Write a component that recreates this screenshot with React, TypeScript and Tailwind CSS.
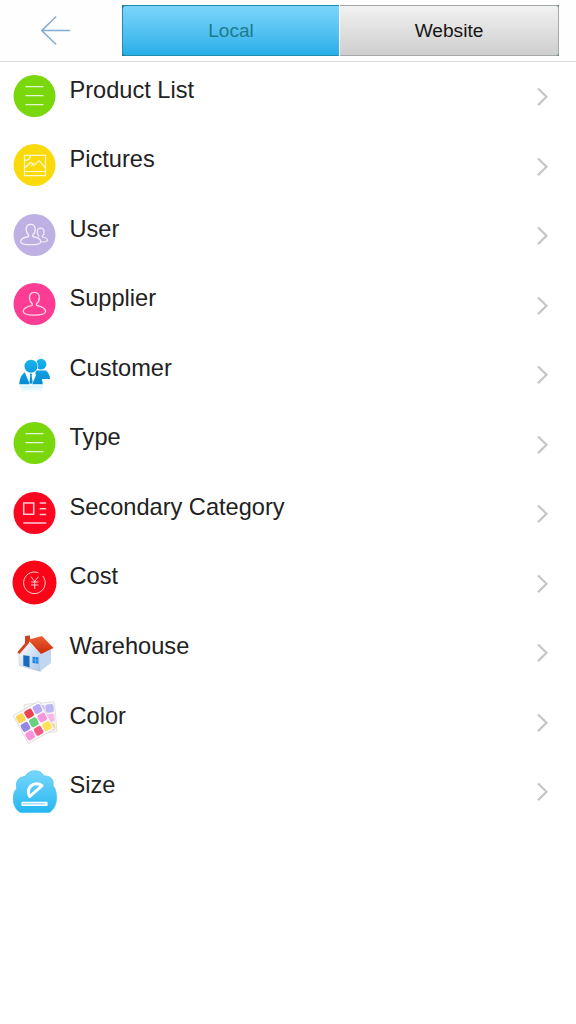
import type { ReactNode } from "react";

function Disc({ color, r = 21, children }: { color: string; r?: number; children: ReactNode }) {
  return (
    <>
      <circle cx="29.5" cy="30" r={r} fill={color} />
      <g fill="none" stroke="#fff" strokeOpacity="0.8" strokeWidth="1.2" strokeLinejoin="round">
        {children}
      </g>
    </>
  );
}

const listIcon = (
  <Disc color="#79d70c">
    <path d="M20.5 20.6h18M20.5 29.6h18M20.5 38.6h18" />
  </Disc>
);

const pictureIcon = (
  <Disc color="#fbda0b">
    <path d="M19.5 20.3h21v20.4h-21zM19.5 36.5h21M20 32.8l5.8-5.6 3 3.4 5.2-5 6.5 7.2M25.5 20.3c0 3.3-2.3 5.2-6 5.2M26 31l3-3" />
  </Disc>
);

const usersIcon = (
  <Disc color="#beb0e3">
    <path
      strokeWidth="1.3"
      d="M25.6 19.3c-2.8 0-4.4 2-4.4 5 0 2.4.9 4.4 2.4 5.4v1.8c-4.3.8-8 2.7-8 5.2 0 2 3.7 3 10.1 3s10.1-1 10.1-3c0-2.500-3.700-4.400-8-5.200v-1.800c1.500-1 2.400-3 2.400-5.400 0-3-1.600-5-4.600-5z"
    />
    <path d="M33.700 30.600c-.9-.8-1.400-2-1.400-3.400 0-2.400 1.300-4 3.400-4s3.400 1.600 3.400 4c0 1.600-.6 2.800-1.600 3.500v1.300c2.900.6 5 1.700 5 3.200 0 1.300-2.400 1.800-6.300 1.800M33.700 30.600v1.200" />
  </Disc>
);

const supplierIcon = (
  <Disc color="#fc3d93">
    <path
      strokeWidth="1.3"
      d="M29.400 18.300c-3.100 0-4.900 2.200-4.900 5.400 0 2.600 1 4.700 2.700 5.800v1.800c-4.600.9-9 3.100-9 6.300 0 2.600 4.400 3.500 11.200 3.500s11.200-.9 11.200-3.500c0-3.200-4.400-5.400-9-6.300v-1.800c1.700-1.100 2.700-3.200 2.700-5.800 0-3.200-1.800-5.400-4.900-5.400z"
    />
  </Disc>
);

const customerIcon = (
  <>
    <defs>
      <linearGradient id="customer" x1="0" y1="15" x2="0" y2="40" gradientUnits="userSpaceOnUse">
        <stop offset="0" stopColor="#1bb3ee" />
        <stop offset="1" stopColor="#058bd6" />
      </linearGradient>
      <linearGradient id="customer-shade" x1="0" y1="0" x2="0" y2="1">
        <stop offset="0" stopColor="#8fdcf8" stopOpacity="0.4" />
        <stop offset="1" stopColor="#8fdcf8" stopOpacity="0" />
      </linearGradient>
    </defs>
    <g fill="url(#customer)">
      <circle cx="36" cy="20.2" r="5.4" />
      <path d="M31 26.5h9.800c2.500 1.700 4 4.700 4.300 8.600h-9l-6-5z" />
      <circle cx="26" cy="22.2" r="7.200" fill="#fff" />
      <circle cx="26" cy="22.2" r="6.500" />
      <path d="M14.200 40.300c.4-6 2.200-10 5.600-12l5 12z" />
      <path d="M37.800 40.300c-.4-6-2.200-10-5.600-12l-5 12z" />
      <path d="M21.500 29l3.300 9 1-6.500-1-1.800zM30.500 29l-3.300 9-1-6.500 1-1.800z" fill="#fff" />
      <path d="M24.700 29.800h2.600l-.6 2 1 6.500-1.700 2-1.700-2 1-6.500z" />
    </g>
    <path d="M15 41.500h23l-1.500 7h-20z" fill="url(#customer-shade)" />
  </>
);

const categoryIcon = (
  <Disc color="#fc0622">
    <path strokeWidth="1.5" strokeLinejoin="miter" d="M18.7 20h10v11.300h-10zM34.700 20h6.500M34.700 25.700h6.500M34.700 31.500h6.500M18.300 40h23" />
  </Disc>
);

const costIcon = (
  <g transform="translate(0 0.5)">
    <Disc color="#fc0417" r={22}>
      <path strokeWidth="1" d="M33.500 20.300a10.800 10.800 0 1 0 4.300 3.200" />
      <path strokeWidth="1" d="M26 24.200l3.700 4.800 3.700-4.800M26 29.500h7.400M26 32.500h7.400M29.700 29v7.500" />
    </Disc>
  </g>
);

const houseIcon = (
  <>
    <defs>
      <linearGradient id="wall" x1="0" y1="0" x2="1" y2="1">
        <stop offset="0" stopColor="#ffffff" />
        <stop offset="1" stopColor="#a9c4e6" />
      </linearGradient>
      <linearGradient id="roof" x1="0" y1="0" x2="0" y2="1">
        <stop offset="0" stopColor="#ed5d33" />
        <stop offset="1" stopColor="#cb2c0a" />
      </linearGradient>
    </defs>
    <path d="M14 30.500l9-10 12.500 10.500v18.500L14 43.500z" fill="url(#wall)" stroke="#a9b9cd" strokeWidth="0.4" />
    <path d="M35 31.500l11-4v13.500l-11 8.500z" fill="#c3d6ef" />
    <path d="M20 14l5-.4v6l-5 3z" fill="#cc4323" />
    <path d="M23 17.700l14-3.700 11.500 12-12.500 6z" fill="url(#roof)" />
    <path d="M12.300 30.200L23 17.700l1.200 3.100L14.500 32z" fill="#d8401d" />
    <path d="M18.300 33.200l6.200.8v11.500l-6.200-1.900z" fill="#1669bf" />
    <path d="M27.500 34.800l6 .4v6.500l-6-.8z" fill="#2287e2" />
    <path d="M30.500 35v6.300M27.500 37.900l6 .5" stroke="#8fc3f5" strokeWidth="0.5" />
  </>
);

const swatches = ["#ffd455", "#ee4150", "#b9aaf6", "#9288e2", "#69d081", "#f895e0", "#fa92dc", "#f45b87", "#fde257"];

const colorIcon = (
  <>
    <g transform="translate(19 13.5) rotate(-5)">
      <rect width="30.5" height="30" rx="1" fill="#f7f5f5" stroke="#d9d2d2" strokeWidth="0.6" />
      <rect x="12" y="2" width="8.2" height="8.2" rx="2" fill="#c3b7f7" />
      <rect x="21" y="2" width="8.2" height="8.2" rx="2" fill="#bcb6f4" />
      <rect x="21" y="11.5" width="8.2" height="8.2" rx="2" fill="#f7b9ea" />
      <rect x="21" y="21" width="8.2" height="7.5" rx="2" fill="#fbe08d" />
    </g>
    <g transform="translate(8 24.5) rotate(-29)">
      <rect width="30" height="32" rx="1" fill="#fbf9f9" stroke="#d4cece" strokeWidth="0.6" />
      {swatches.map((fill, i) => (
        <rect key={i} x={1.3 + (i % 3) * 9.6} y={2 + Math.floor(i / 3) * 9.8} width="8.2" height="8.4" rx="2" fill={fill} />
      ))}
    </g>
  </>
);

const sizeIcon = (
  <g transform="translate(0 0.8)">
    <defs>
      <linearGradient id="cloud" x1="0" y1="0" x2="0" y2="1">
        <stop offset="0" stopColor="#79d7fb" />
        <stop offset="1" stopColor="#24b7f2" />
      </linearGradient>
    </defs>
    <path
      d="M15.5 50.800c-4.700-2.600-7.200-7.500-7.200-13.500 0-5 1-8.700 3.500-10.300-1.500-6.500 1-12 8.300-12.200 2-3.800 6-6 10.700-5.800 3.700.2 6.700 2.200 8.200 5.200 6.300-.7 10.300 3.800 9 9.800 2.500 2.500 3.500 7 3.500 12 0 6.500-2.500 12-7.300 14.800z"
      fill="url(#cloud)"
      stroke="#3fc0f2"
      strokeWidth="0.7"
    />
    <path d="M37 23.800c-2.800-2.500-8-2.600-11 .2-2.800 2.600-3.300 6.800-1.200 10.700z" fill="none" stroke="#fff" strokeWidth="3" strokeLinejoin="round" />
    <rect x="16.5" y="40" width="26" height="4.300" rx="0.6" fill="#fff" />
    <path d="M18.500 41.900h22" stroke="#42bff3" strokeWidth="1.4" strokeDasharray="1 1" />
  </g>
);

const items = [
  { label: "Product List", icon: listIcon },
  { label: "Pictures", icon: pictureIcon },
  { label: "User", icon: usersIcon },
  { label: "Supplier", icon: supplierIcon },
  { label: "Customer", icon: customerIcon },
  { label: "Type", icon: listIcon },
  { label: "Secondary Category", icon: categoryIcon },
  { label: "Cost", icon: costIcon },
  { label: "Warehouse", icon: houseIcon },
  { label: "Color", icon: colorIcon },
  { label: "Size", icon: sizeIcon },
];

export default function App() {
  return (
    <div className="min-h-screen bg-white font-['Liberation_Sans',Arial,sans-serif]">
      <header className="flex h-[62px] items-start border-b border-[#dcdce0] bg-[#fefefe] pt-[5px]">
        <button className="ml-10 mr-[50px] mt-[10px] h-8 w-8" aria-label="Back">
          <svg width="32" height="32" viewBox="0 0 32 32" fill="none" stroke="#83acd5" strokeWidth="1.5" strokeLinecap="round" strokeLinejoin="round">
            <path d="M29.700 15.600H1.700M15.700 2L1.700 15.600l14 13.400" />
          </svg>
        </button>
        <div className="flex h-[51px] w-[437px] gap-px text-[19.1px]">
          <div className="w-[217px] bg-[#17788c]">
            <button className="h-full w-full rounded-l-[4px] border border-r-0 border-[#238dad] bg-linear-to-b from-[#7ad5fb] to-[#22afe8] pt-0.5 text-[#1d7c8c]">
              Local
            </button>
          </div>
          <div className="flex-1 bg-[#557f88]">
            <button className="h-full w-full rounded-r-[3px] border border-l-0 border-[#a5a8a9] bg-linear-to-b from-[#f2f2f2] to-[#cecece] pt-0.5 text-[#151515]">
              Website
            </button>
          </div>
        </div>
      </header>

      <ul>
        {items.map((item) => (
          <li key={item.label} className="flex h-[69.55px] items-start">
            <svg className="ml-[5px] mt-[3.5px] shrink-0" width="60" height="60" viewBox="0 0 60 60">
              {item.icon}
            </svg>
            <span className="ml-[4.5px] mt-[9.6px] flex-1 text-[23.6px] leading-9 text-[#222]">{item.label}</span>
            <svg className="mr-[27px] mt-[25px]" width="13" height="20" viewBox="0 0 13 20" fill="none" stroke="#c5c5ca" strokeWidth="2.2">
              <path d="M2 1.500l8.500 8.300L2 18.100" />
            </svg>
          </li>
        ))}
      </ul>
    </div>
  );
}
